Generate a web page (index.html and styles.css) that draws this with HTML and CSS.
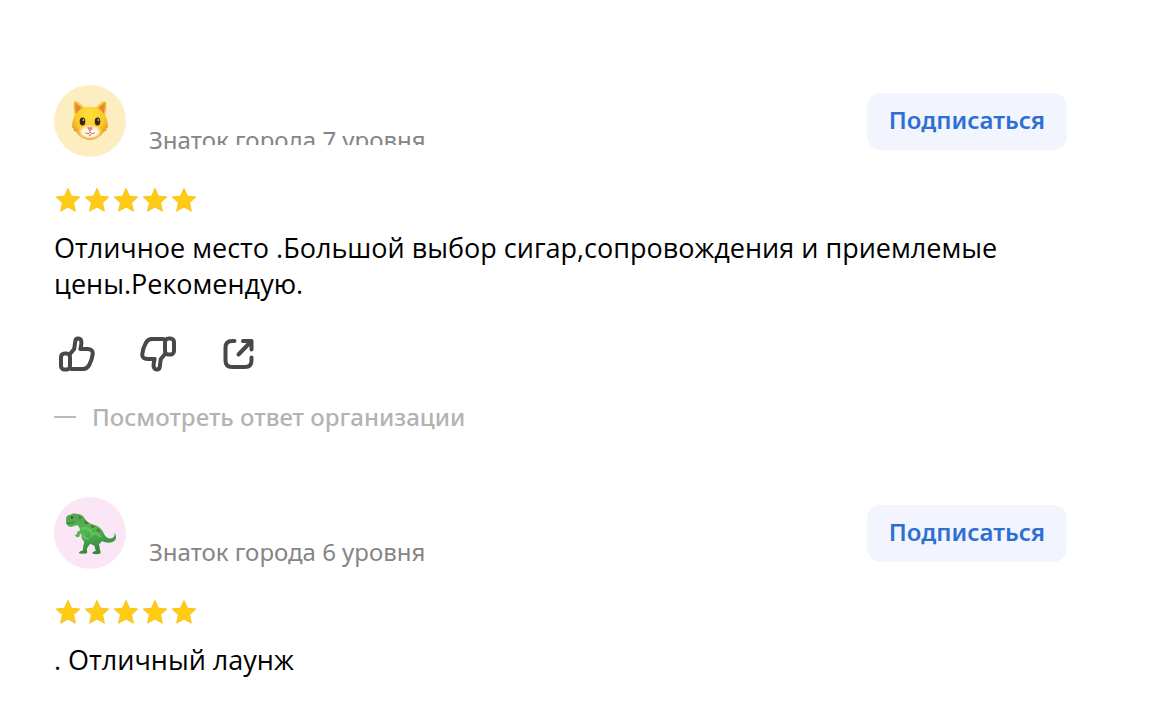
FILE: index.html
```html
<!DOCTYPE html>
<html lang="ru">
<head>
<meta charset="utf-8">
<meta name="viewport" content="width=device-width, initial-scale=1">
<title>Отзывы</title>
<link rel="stylesheet" href="styles.css">
</head>
<body>
<svg class="defs" aria-hidden="true">
  <symbol id="star" viewBox="0 0 26 26"><path d="M13 1.500l3.500 7.700 8.300.8-6.300 5.800 1.900 8.400L13 20l-7.400 4.200 1.900-8.400L1.200 10l8.300-.8z"/></symbol>
</svg>
<main class="reviews">
  <article class="review">
    <header class="review-header">
      <svg class="avatar" viewBox="0 0 72 72" role="img" aria-label="Кот">
        <defs>
          <radialGradient id="fur" cx=".5" cy=".35" r=".65"><stop offset="0" stop-color="#ffe23c"/><stop offset=".65" stop-color="#fbc72b"/><stop offset="1" stop-color="#e3921d"/></radialGradient>
          <radialGradient id="muzzle"><stop offset="0" stop-color="#fffdf5"/><stop offset=".6" stop-color="#fff3d8"/><stop offset="1" stop-color="#fbd871" stop-opacity="0"/></radialGradient>
        </defs>
        <circle cx="36" cy="36" r="36" fill="#fdeec2"/>
        <path d="M20 18c.2-1.500 1.500-2 2.800-1.200 3 1.600 5.500 3.500 7.700 5.700 3.500-1 7.500-1 11 0 2.200-2.200 4.700-4.100 7.700-5.700 1.300-.8 2.600-.3 2.800 1.200.4 4.500.3 8-.8 11.500 2 4.500 3 9.500 2.500 13.500l-1.700 1 .5 2-2.500.5C47 51.500 41.500 54.800 36 54.800S25 51.500 22 46.500l-2.500-.5.5-2-1.700-1c-.5-4 .5-9 2.500-13.500-1.100-3.500-1.200-7-.8-11.500z" fill="url(#fur)"/>
        <path d="M21.500 18.500c2.500 1.200 4.700 2.700 6.500 4.500-2.500 1.500-4.500 3.500-5.700 6-1-3.500-1.100-7-.8-10.500zM50.500 18.500c-2.500 1.200-4.700 2.700-6.500 4.500 2.500 1.500 4.500 3.500 5.700 6 1-3.500 1.100-7 .8-10.500z" fill="#e9853a"/>
        <ellipse cx="36" cy="47" rx="13" ry="8" fill="url(#muzzle)"/>
        <ellipse cx="28.500" cy="36.500" rx="2.800" ry="3.900" fill="#39290c"/><ellipse cx="43.500" cy="36.500" rx="2.800" ry="3.900" fill="#39290c"/>
        <circle cx="29.300" cy="35" r=".8" fill="#fff"/><circle cx="44.300" cy="35" r=".8" fill="#fff"/>
        <path d="M33 42.500q3-1 6 0-.6 2.500-3 3.200-2.400-.7-3-3.200z" fill="#e9808f"/>
        <path d="M36 45.500v1.500m-4.500 1q3 2 4.500-.8 1.500 2.800 4.500.8" fill="none" stroke="#b98051" stroke-width="1" stroke-linecap="round"/>
        <path d="M34.500 49.200q1.500.8 3 0-.2 1.800-1.500 1.800t-1.500-1.800z" fill="#db7a68"/>
      </svg>
      <p class="level">Знат<span class="cut">ок города 7 уровня</span></p>
      <button class="subscribe" type="button">Подписаться</button>
    </header>
    <div class="stars" role="img" aria-label="5 из 5">
      <svg><use href="#star"/></svg><svg><use href="#star"/></svg><svg><use href="#star"/></svg><svg><use href="#star"/></svg><svg><use href="#star"/></svg>
    </div>
    <p class="text">Отличное место .Большой выбор сигар,сопровождения и приемлемые цены.Рекомендую.</p>
    <div class="actions">
      <button class="action" type="button" aria-label="Нравится"><svg viewBox="0 0 36 36"><path d="M10.500 18.500l4.700-5.500 1-7.500c.4-4.300 6-3.800 6.200.500.1 2.500-.4 4.500-1 7h7.100c3.500 0 5.600 1.500 5.200 5-.5 4.500-1.500 7.500-3.500 11-1.500 2.800-3 4-6 4H12.500"/><rect x="2" y="17.500" width="9" height="16" rx="3.500"/></svg></button>
      <button class="action" type="button" aria-label="Не нравится"><svg viewBox="0 0 36 36"><g transform="rotate(180 18 18)"><path d="M10.500 18.500l4.700-5.500 1-7.500c.4-4.300 6-3.800 6.200.500.1 2.500-.4 4.500-1 7h7.100c3.500 0 5.600 1.500 5.200 5-.5 4.500-1.500 7.500-3.500 11-1.500 2.800-3 4-6 4H12.500"/><rect x="2" y="17.500" width="9" height="16" rx="3.500"/></g></svg></button>
      <button class="action" type="button" aria-label="Поделиться"><svg viewBox="0 0 36 36"><path d="M13.500 5H11c-4.500 0-6.500 2-6.500 6.500v13c0 4.500 2 6.500 6.500 6.500h13c4.500 0 6.500-2 6.500-6.500V21.500M17.500 18.500L30 5.500M22 5h8.500v8.500"/></svg></button>
    </div>
    <a class="answer" href="#answer"><span class="dash"></span>Посмотреть ответ организации</a>
  </article>
  <article class="review">
    <header class="review-header">
      <svg class="avatar" viewBox="0 0 72 72" role="img" aria-label="Динозавр">
        <defs><linearGradient id="skin" x1="0" y1="0" x2=".3" y2="1"><stop offset="0" stop-color="#56a04c"/><stop offset=".5" stop-color="#4fb853"/><stop offset="1" stop-color="#34893e"/></linearGradient></defs>
        <circle cx="36" cy="36" r="36" fill="#fbe6f6"/>
        <path d="M12 21c.5-2 2-3 4.500-3.200 2-1.500 5-1.700 7.500-.7 3.500.3 5.500 2.200 7 5 2.500 3.500 5.500 4.700 9 5.700 5.500 1.500 8.500 5 10.500 10 2 3.500 5 4.300 8 3.300 2-1 2.300-3 1.700-5 2.500 2 2.500 6 0 8-3.500 2.500-8 2-12.500 0-.5 1.500-1.500 2.500-2.700 3l1 6c.8 1.500.8 2.500.3 3.500-2.500.8-5.500.8-8 0 0-1.500 1.500-2.300 3.500-2.500l-1.500-5.500c-1.500-.5-3-1-4-1.800l-2.500 3.200-1 2 .5 3.500c-.5 1-2 1.500-4 1-1.500.3-3.500.2-4.500-.6.5-1.500 2.500-2 4-2.400l.5-5 1-3.500c-2.500-2.500-3.500-5.500-3-8.500l-1.500.7-.5 2.500-2.500.5-2-2 2-1 .5-2.500 3-1.500c-.7-2-1.500-3.500-2.500-5l-3.500.5c-1 1-3 1.200-5 1-2.500-1-4-4-3-8.900z" fill="url(#skin)"/>
        <path d="M28 32c4-2 8 0 9.500 3.500M37 39c3-4 7-3 9 .5M29 38c1 2.500 3 3.500 5 4" fill="none" stroke="#86d66c" stroke-width="2.200" stroke-linecap="round" opacity=".5"/>
        <path d="M31 23l3.500 4-4-.5zM37 28l4.500 2-4 .8zM43 31l4 4-4-1zM25 19l3 2-3 .5z" fill="#7b4c3d"/>
        <circle cx="18" cy="20.500" r="1" fill="#173d1c"/><path d="M12.500 26.500q5 0 8-2" fill="none" stroke="#2f7536" stroke-width="1"/>
      </svg>
      <p class="level">Знаток города 6 уровня</p>
      <button class="subscribe" type="button">Подписаться</button>
    </header>
    <div class="stars" role="img" aria-label="5 из 5">
      <svg><use href="#star"/></svg><svg><use href="#star"/></svg><svg><use href="#star"/></svg><svg><use href="#star"/></svg><svg><use href="#star"/></svg>
    </div>
    <p class="text">. Отличный лаунж</p>
  </article>
</main>
</body>
</html>
```
FILE: styles.css
```css
* { box-sizing: border-box; }
body {
  margin: 0;
  background: #fff;
  color: #000;
  font-family: "Noto Sans", sans-serif;
}
p { margin: 0; }
button { border: 0; font-family: inherit; cursor: pointer; }
.defs { position: absolute; width: 0; height: 0; }
.reviews {
  display: flex;
  flex-direction: column;
  gap: 63px;
  padding: 85px 103px 40px 54px;
}
.review-header { display: flex; align-items: center; }
.avatar { width: 72px; height: 72px; flex: none; }
.level {
  flex: 1;
  align-self: flex-end;
  margin-left: 23px;
  color: #858585;
  font-size: 24px;
  line-height: 34px;
}
.cut { clip-path: inset(0 0 12px 0); display: inline-block; }
.subscribe {
  padding: 10px 22px 14px;
  border-radius: 14px;
  background: #f2f5fd;
  color: #2d6fd2;
  font-size: 24px;
  font-weight: 600;
  line-height: 33px;
}
.stars { display: flex; gap: 3px; margin-top: 30px; padding-left: 1px; }
.stars svg {
  width: 26px;
  height: 26px;
  fill: #ffcb13;
  stroke: #f5c51d;
  stroke-width: 1;
  stroke-linejoin: round;
}
.text {
  margin-top: 17px;
  font-family: "Open Sans", "Noto Sans", sans-serif;
  font-size: 27px;
  font-weight: 450;
  line-height: 36px;
}
.actions { display: flex; gap: 45px; margin-top: 34px; padding-left: 5px; }
.action { padding: 0; background: none; }
.action svg {
  display: block;
  width: 36px;
  height: 36px;
  fill: none;
  stroke: #484848;
  stroke-width: 4;
  stroke-linecap: round;
  stroke-linejoin: round;
}
.answer {
  display: flex;
  align-items: center;
  gap: 16px;
  margin-top: 28px;
  color: #b3b3b3;
  font-size: 24px;
  font-weight: 500;
  line-height: 34px;
  text-decoration: none;
}
.dash { width: 22px; height: 2px; background: #bcbcbc; }
```
